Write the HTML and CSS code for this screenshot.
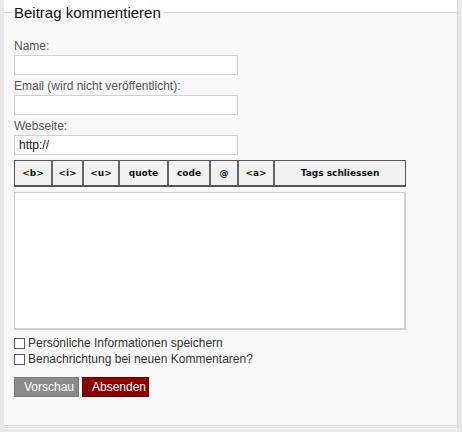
FILE: index.html
```html
<!DOCTYPE html>
<html>
<head>
<meta charset="utf-8">
<link rel="stylesheet" href="styles.css">
</head>
<body>
<div class="frame">
  <form class="comment">
    <fieldset class="box">
      <legend class="title">Beitrag kommentieren</legend>
      <label class="lbl first" for="n">Name:</label>
      <input class="field" id="n" type="text">
      <label class="lbl" for="e">Email (wird nicht veröffentlicht):</label>
      <input class="field" id="e" type="text">
      <label class="lbl" for="w">Webseite:</label>
      <input class="field" id="w" type="text" value="http://">
      <div class="toolbar">
        <span class="tb w36">&lt;b&gt;</span>
        <span class="tb w31">&lt;i&gt;</span>
        <span class="tb w36">&lt;u&gt;</span>
        <span class="tb w49">quote</span>
        <span class="tb w42">code</span>
        <span class="tb w28">@</span>
        <span class="tb w36">&lt;a&gt;</span>
        <span class="tb wlast">Tags schliessen</span>
      </div>
      <textarea class="text"></textarea>
      <label class="check c1"><span class="cb"></span>Persönliche Informationen speichern</label>
      <label class="check"><span class="cb"></span>Benachrichtung bei neuen Kommentaren?</label>
      <div class="actions">
        <span class="btn preview">Vorschau</span>
        <span class="btn send">Absenden</span>
      </div>
    </fieldset>
  </form>
</div>
</body>
</html>
```
FILE: styles.css
```css
html, body {
  margin: 0;
  padding: 0;
}
body {
  background: #e8e8e8;
  width: 462px;
  height: 432px;
  overflow: hidden;
  font-family: "Liberation Sans", Arial, sans-serif;
}
.frame {
  margin-left: 4px;
  width: 454px;
  height: 429px;
  background: #ffffff;
  border-right: 1px solid #d8d8d8;
  box-sizing: border-box;
  padding-top: 4px;
}
.comment {
  margin: 0;
}
.box {
  margin: 0;
  padding: 0 0 0 10px;
  border: 0;
  border-top: 1px solid #d4d4d4;
  border-bottom: 3px double #d8d8d8;
  background: #f8f8f8;
  height: 424px;
  box-sizing: border-box;
  display: flex;
  flex-direction: column;
  align-items: flex-start;
  min-width: 0;
}
.title {
  font-family: "Liberation Sans", Arial, sans-serif;
  font-size: 15px;
  color: #111;
  padding: 0 3px;
  margin-left: -3px;
}
.lbl {
  font-size: 12px;
  color: #555;
  line-height: 14px;
  margin-top: 4px;
  margin-bottom: 2px;
}
.lbl.first {
  margin-top: 18px;
}
.field {
  width: 224px;
  height: 20px;
  box-sizing: border-box;
  border: 1px solid #cfcfcf;
  background: #fff;
  margin: 0;
  padding: 0 4px;
  font-family: "Liberation Sans", Arial, sans-serif;
  font-size: 12px;
  color: #111;
}
.toolbar {
  margin-top: 5px;
  display: flex;
  height: 27px;
  box-sizing: border-box;
  border: 1px solid #555;
  border-bottom-width: 2px;
  background: #f2f2f2;
}
.tb {
  box-sizing: border-box;
  border-left: 2px solid #666;
  display: flex;
  align-items: center;
  justify-content: center;
  font-family: "DejaVu Sans", Verdana, sans-serif;
  font-weight: bold;
  font-size: 9px;
  color: #111;
}
.tb:first-child { border-left: 0; }
.w36 { width: 36px; }
.w31 { width: 31px; }
.w49 { width: 49px; }
.w42 { width: 42px; }
.w28 { width: 28px; }
.wlast { width: 132px; }
.text {
  margin-top: 5px;
  width: 392px;
  height: 138px;
  box-sizing: border-box;
  border: 1px solid #cfcfcf;
  border-right-width: 2px;
  border-bottom-width: 2px;
  background: #fff;
  resize: none;
}
.check {
  display: flex;
  align-items: center;
  font-size: 12px;
  color: #333;
  line-height: 16px;
}
.check.c1 { margin-top: 5px; }
.cb {
  width: 9px;
  height: 9px;
  border: 1px solid #4d5a6a;
  background: #fff;
  margin-right: 3px;
}
.actions {
  display: flex;
  gap: 3px;
  margin-top: 10px;
}
.btn {
  height: 20px;
  box-sizing: border-box;
  display: flex;
  align-items: center;
  padding: 0 9px;
  font-size: 12px;
  color: #fff;
}
.preview {
  background: #8a8a8a;
  border: 1px solid #7a7a7a;
  width: 65px;
}
.send {
  background: #8b0000;
  border: 1px solid #6e0000;
  width: 67px;
}
```
